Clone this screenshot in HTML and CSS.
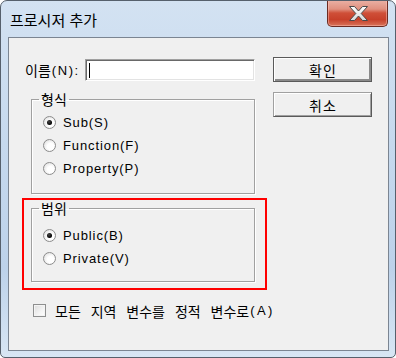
FILE: index.html
```html
<!DOCTYPE html>
<html lang="ko">
<head>
<meta charset="utf-8">
<link rel="stylesheet" href="styles.css">
</head>
<body>
<div class="window">
  <div class="titlebar">
    <span class="title">프로시저 추가</span>
    <div class="close">
      <svg width="21" height="17" viewBox="0 0 21 17">
        <defs>
          <linearGradient id="xg" x1="0" y1="0" x2="0" y2="1">
            <stop offset="0" stop-color="#ffffff"/>
            <stop offset="1" stop-color="#d8d8d8"/>
          </linearGradient>
        </defs>
        <polygon points="1.5,1.5 6.5,1.5 10.5,6 14.5,1.5 19.5,1.5 13.2,8.5 19.5,15.5 14.5,15.5 10.5,11 6.5,15.5 1.5,15.5 7.8,8.5" fill="url(#xg)" stroke="#4a4a4a" stroke-width="1" stroke-linejoin="round"/>
      </svg>
    </div>
  </div>
  <div class="client">
    <div class="left">
      <div class="name-row">
        <span class="name-label"><span class="ko">이름</span><span class="paren">(N):</span></span>
        <div class="textbox"><span class="caret"></span></div>
      </div>
      <fieldset class="group g1">
        <legend>형식</legend>
        <div class="opt"><span class="radio on"></span><span class="opt-text">Sub(S)</span></div>
        <div class="opt"><span class="radio"></span><span class="opt-text">Function(F)</span></div>
        <div class="opt"><span class="radio"></span><span class="opt-text">Property(P)</span></div>
      </fieldset>
      <div class="highlight">
        <fieldset class="group g2">
          <legend>범위</legend>
          <div class="opt"><span class="radio on"></span><span class="opt-text">Public(B)</span></div>
          <div class="opt"><span class="radio"></span><span class="opt-text">Private(V)</span></div>
        </fieldset>
      </div>
      <div class="check-row"><span class="check"></span><span class="check-text"><span class="ko spaced">모든 지역 변수를 정적 변수로</span><span class="paren">(A)</span></span></div>
    </div>
    <div class="right">
      <div class="btn default"><span class="ko">확인</span></div>
      <div class="btn"><span class="ko">취소</span></div>
    </div>
  </div>
</div>
</body>
</html>
```

FILE: styles.css
```css
* { box-sizing: border-box; }
html, body { margin: 0; padding: 0; }
body {
  width: 396px;
  height: 358px;
  overflow: hidden;
  font-family: "Liberation Sans", "Noto Sans CJK KR", sans-serif;
  font-size: 13px;
  color: #000;
}
.ko {
  font-family: "Noto Sans CJK KR", sans-serif;
  font-size: 14px;
  letter-spacing: 0;
}
.paren {
  letter-spacing: 1.6px;
}
.window {
  width: 396px;
  height: 358px;
  border: 1px solid #56606c;
  border-radius: 7px 7px 5px 5px;
  background: linear-gradient(180deg, #d3e2f2 0%, #c6d9ee 40%, #bdd2ea 75%, #d8e6f4 100%);
  display: flex;
  flex-direction: column;
  overflow: hidden;
}
.titlebar {
  height: 36px;
  display: flex;
  justify-content: space-between;
  align-items: flex-start;
}
.title {
  font-family: "Noto Sans CJK KR", sans-serif;
  font-size: 15px;
  line-height: 20px;
  margin: 9px 0 0 9px;
  color: #000;
}
.close {
  width: 61px;
  height: 27px;
  margin: -1px 7px 0 0;
  border: 1px solid #6b2b22;
  border-top: none;
  border-radius: 0 0 5px 5px;
  background: linear-gradient(180deg, #eab2a6 0%, #e0907f 35%, #cf4f38 50%, #c7402a 75%, #d8745a 100%);
  box-shadow: inset 0 0 0 1px rgba(255, 200, 190, 0.45);
  display: flex;
  align-items: center;
  justify-content: center;
  padding-left: 1px;
}
.close svg { display: block; }
.client {
  height: 314px;
  margin: 0 6px 0 7px;
  border: 1px solid #7b8592;
  background: #f0f0f0;
  display: flex;
  padding: 0 15px 0 13px;
  gap: 6px;
}
.left {
  width: 245px;
  flex: none;
  padding-top: 21px;
  display: flex;
  flex-direction: column;
}
.name-row {
  height: 22px;
  display: flex;
  align-items: center;
}
.name-label {
  width: 63px;
  padding-left: 3px;
  display: flex;
  align-items: center;
}
.name-label .ko { margin-right: 1px; }
.textbox {
  width: 170px;
  height: 22px;
  background: #fff;
  border: 1px solid;
  border-color: #a0a0a0 #ffffff #ffffff #a0a0a0;
  box-shadow: inset 1px 1px 0 #696969, inset -1px -1px 0 #e3e3e3;
  padding: 3px 0 0 3px;
}
.caret {
  display: block;
  width: 1px;
  height: 15px;
  background: #000;
}
.group {
  margin: 11px 0 0 9px;
  width: 224px;
  border: 1px solid #a0a0a0;
  box-shadow: 1px 1px 0 #fff, inset 1px 1px 0 #fff;
  padding: 5px 0 13px 11px;
  min-width: 0;
}
.group legend {
  padding: 0 2px;
  margin-left: -4px;
  font-family: "Noto Sans CJK KR", sans-serif;
  font-size: 14px;
  line-height: 14px;
}
.g2 {
  margin: 0 0 0 7px;
  padding: 9px 0 11px 11px;
}
.opt {
  height: 23px;
  display: flex;
  align-items: center;
  gap: 7px;
}
.opt-text { letter-spacing: 0.9px; }
.radio {
  width: 13px;
  height: 13px;
  border-radius: 50%;
  border: 1px solid #8c8c8c;
  background: radial-gradient(circle at 60% 60%, #ffffff 35%, #e6e6e6 75%, #cfcfcf 100%);
  display: flex;
  align-items: center;
  justify-content: center;
  flex: none;
}
.radio.on::after {
  content: "";
  width: 5px;
  height: 5px;
  border-radius: 50%;
  background: radial-gradient(circle at 40% 35%, #444 0%, #000 70%);
}
.highlight {
  margin-top: 4px;
  width: 245px;
  border: 2px solid #ff0000;
  padding: 1px 0 6px 0;
}
.check-row {
  margin-top: 9px;
  height: 23px;
  display: flex;
  align-items: center;
  gap: 9px;
  padding-left: 11px;
}
.check {
  width: 13px;
  height: 13px;
  border: 1px solid #8e8f8f;
  background: linear-gradient(135deg, #dcdcdc 0%, #f4f4f4 60%, #ffffff 100%);
  box-shadow: inset 0 0 0 1px #f4f4f4;
  flex: none;
}
.check-text {
  display: flex;
  align-items: center;
  flex: none;
  white-space: nowrap;
}
.check-text .spaced {
  word-spacing: 6px;
  margin-right: 1px;
}
.check-text .paren {
  letter-spacing: 2.4px;
}
.right {
  padding-top: 19px;
  display: flex;
  flex-direction: column;
  gap: 10px;
}
.btn {
  width: 99px;
  height: 25px;
  display: flex;
  align-items: center;
  justify-content: center;
  background: #f0f0f0;
  border: 1px solid;
  border-color: #a0a0a0 #5a5a5a #5a5a5a #a0a0a0;
  box-shadow: inset 1px 1px 0 #ffffff, inset -1px -1px 0 #a0a0a0;
  padding-left: 1px;
}
.btn .ko { letter-spacing: 1px; }
.btn.default {
  border-color: #5a5a5a;
  box-shadow: inset 1px 1px 0 #ffffff, inset -2px -2px 0 #8a8a8a;
}
```
